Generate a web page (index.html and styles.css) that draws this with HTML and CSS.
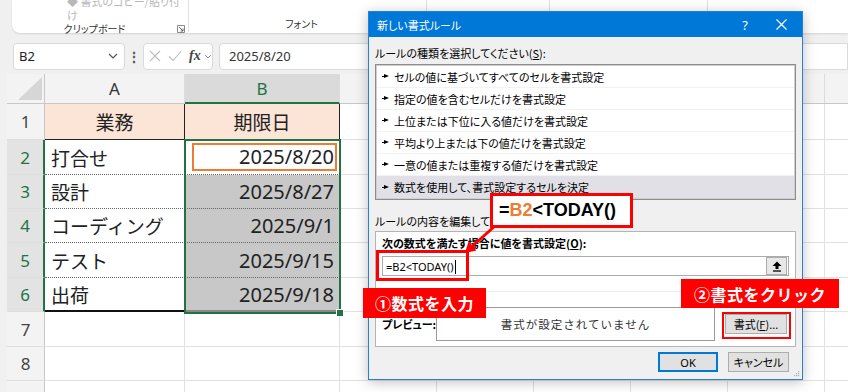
FILE: index.html
```html
<!DOCTYPE html>
<html lang="ja">
<head>
    <meta charset="UTF-8">
    <title>新しい書式ルール</title>
    <link rel="stylesheet" href="styles.css">
</head>
<body>
    <!-- ribbon -->
    <div class="ribbon">
        <div class="grp clip">
            <span class="ghost">&#9670; 書式のコピー/貼り付け</span>
            <div class="gfoot">
                <span class="glabel">クリップボード</span>
                <svg class="launch" width="8" height="8" viewBox="0 0 8 8"><path d="M0.5 0.5H7.5V7.5H0.5Z" fill="none" stroke="#888"/><path d="M2 2L6 6M6 3.5V6H3.5" fill="none" stroke="#666"/></svg>
            </div>
        </div>
        <div class="grp fnt">
            <div class="gfoot"><span class="glabel pad">フォント</span></div>
        </div>
        <div class="grp g3"></div>
        <div class="grp g4"></div>
        <div class="grp g5"></div>
    </div>

    <!-- formula bar -->
    <div class="fbar">
        <div class="namebox">
            <span>B2</span>
            <svg width="10" height="6" viewBox="0 0 10 6"><path d="M1 1L5 5L9 1" fill="none" stroke="#555" stroke-width="1.2"/></svg>
        </div>
        <div class="vdots">&#8942;</div>
        <div class="fxbox">
            <svg width="12" height="12" viewBox="0 0 12 12"><path d="M1 1L11 11M11 1L1 11" stroke="#bdbdbd" stroke-width="1.1"/></svg>
            <svg width="14" height="12" viewBox="0 0 14 12"><path d="M1 6.5L5 10.5L13 1.5" fill="none" stroke="#bdbdbd" stroke-width="1.1"/></svg>
            <span class="fx">fx</span>
            <svg width="8" height="5" viewBox="0 0 8 5"><path d="M1 1L4 4L7 1" fill="none" stroke="#999"/></svg>
        </div>
        <div class="formula">2025/8/20</div>
    </div>

    <!-- sheet -->
    <div class="sheet">
        <div class="row hdr">
            <div class="rh corner"><span class="tri"></span></div>
            <div class="ch">A</div>
            <div class="ch on">B</div>
            <div class="rest"></div>
        </div>
        <div class="row h36">
            <div class="rh">1</div>
            <div class="c a title">業務</div>
            <div class="c b title">期限日</div>
            <div class="rest"></div>
        </div>
        <div class="row h35">
            <div class="rh on">2</div>
            <div class="c a">打合せ</div>
            <div class="c b act"><span class="mark">2025/8/20</span></div>
            <div class="rest"></div>
        </div>
        <div class="row h34">
            <div class="rh on">3</div>
            <div class="c a">設計</div>
            <div class="c b gray">2025/8/27</div>
            <div class="rest"></div>
        </div>
        <div class="row h34">
            <div class="rh on">4</div>
            <div class="c a">コーディング</div>
            <div class="c b gray">2025/9/1</div>
            <div class="rest"></div>
        </div>
        <div class="row h35">
            <div class="rh on">5</div>
            <div class="c a">テスト</div>
            <div class="c b gray">2025/9/15</div>
            <div class="rest"></div>
        </div>
        <div class="row h34">
            <div class="rh on">6</div>
            <div class="c a last">出荷</div>
            <div class="c b gray last">2025/9/18</div>
            <div class="rest"></div>
        </div>
        <div class="row h35">
            <div class="rh">7</div>
            <div class="c a"></div>
            <div class="c b"></div>
            <div class="rest"></div>
        </div>
        <div class="row h34">
            <div class="rh">8</div>
            <div class="c a"></div>
            <div class="c b"></div>
            <div class="rest"></div>
        </div>
        <div class="row h34">
            <div class="rh"></div>
            <div class="c a"></div>
            <div class="c b"></div>
            <div class="rest"></div>
        </div>
        <div class="sel"><span class="handle"></span></div>
    </div>

    <!-- dialog -->
    <div class="dlg">
        <div class="dlg-title">
            <span class="dlg-name">新しい書式ルール</span>
            <span class="tb-btn">?</span>
            <span class="tb-btn">
                <svg width="11" height="11" viewBox="0 0 11 11"><path d="M0.5 0.5L10.5 10.5M10.5 0.5L0.5 10.5" stroke="#fff" stroke-width="1.2"/></svg>
            </span>
        </div>
        <div class="dlg-body">
            <div class="lbl">ルールの種類を選択してください(<u>S</u>):</div>
            <div class="listbox">
                <div class="item"><i class="ptr"></i>セルの値に基づいてすべてのセルを書式設定</div>
                <div class="item"><i class="ptr"></i>指定の値を含むセルだけを書式設定</div>
                <div class="item"><i class="ptr"></i>上位または下位に入る値だけを書式設定</div>
                <div class="item"><i class="ptr"></i>平均より上または下の値だけを書式設定</div>
                <div class="item"><i class="ptr"></i>一意の値または重複する値だけを書式設定</div>
                <div class="item chosen"><i class="ptr"></i>数式を使用して、書式設定するセルを決定</div>
            </div>
            <div class="lbl lbl2">ルールの内容を編集してください(<u>E</u>):</div>
            <div class="group">
                <div class="glbl">次の数式を満たす場合に値を書式設定(<u>O</u>):</div>
                <div class="input">
                    <span class="itext">=B2&lt;TODAY()<span class="caret"></span></span>
                    <span class="collapse">
                        <svg width="10" height="11" viewBox="0 0 10 11"><path d="M5 0.5L9.5 5H6.5V8H3.5V5H0.5Z" fill="#000"/><path d="M1 10H9" stroke="#000" stroke-width="1.3"/></svg>
                    </span>
                </div>
                <div class="sep"></div>
                <div class="preview-row">
                    <span class="plbl">プレビュー:</span>
                    <div class="preview">書式が設定されていません</div>
                    <span class="btn fmt">書式(<u>F</u>)...</span>
                </div>
            </div>
            <div class="actions">
                <span class="btn ok">OK</span>
                <span class="btn">キャンセル</span>
            </div>
        </div>
        <svg class="grip" width="7" height="7" viewBox="0 0 7 7"><g fill="#b0b0b0"><rect x="5" y="1" width="1.2" height="1.2"/><rect x="3" y="3" width="1.2" height="1.2"/><rect x="5" y="3" width="1.2" height="1.2"/><rect x="1" y="5" width="1.2" height="1.2"/><rect x="3" y="5" width="1.2" height="1.2"/><rect x="5" y="5" width="1.2" height="1.2"/></g></svg>
    </div>

    <!-- annotations -->
    <svg class="arrow" width="848" height="392" viewBox="0 0 848 392">
        <line x1="496" y1="225" x2="472" y2="246.5" stroke="#f00" stroke-width="3"/>
        <polygon points="465,253 468.5,241.5 476.5,250.5" fill="#f00"/>
    </svg>
    <div class="callout">=<span class="orange">B2</span>&lt;TODAY()</div>
    <div class="hl-input"></div>
    <div class="hl-btn"></div>
    <div class="tag tag1">①数式を入力</div>
    <div class="tag tag2">②書式をクリック</div>
</body>
</html>
```

FILE: styles.css
```css
body {
    margin: 0;
    width: 848px;
    height: 392px;
    overflow: hidden;
    position: relative;
    background-color: #f0f0f0;
    font-family: "Noto Sans CJK JP", sans-serif;
    color: #222;
}

/* ribbon */
.ribbon {
    display: flex;
    height: 33px;
    margin-left: 12px;
    background-color: #fff;
    border-radius: 0 0 0 8px;
    box-shadow: 0 1px 2px rgba(0, 0, 0, 0.12);
}

.grp {
    display: flex;
    flex-direction: column;
    height: 32px;
    border-right: 1px solid #e1e1e1;
    box-sizing: border-box;
}

.clip { width: 177px; }
.fnt { width: 238px; }
.g3 { width: 123px; }
.g4 { width: 158px; }
.g5 { flex: 1; border-right: none; }

.ghost {
    margin: -6px 0 0 55px;
    font-size: 11px;
    line-height: 14px;
    color: #b8b8b8;
    font-feature-settings: "palt";
}

.gfoot {
    display: flex;
    align-items: center;
    margin-top: auto;
    height: 14px;
    padding-bottom: 1px;
}

.glabel {
    flex: 1;
    text-align: center;
    font-size: 10px;
    line-height: 14px;
    color: #333;
    font-feature-settings: "palt";
}

.glabel.pad {
    padding-right: 12px;
}

.launch {
    margin-right: 3px;
}

/* formula bar */
.fbar {
    display: flex;
    align-items: center;
    height: 28px;
    margin-top: 9px;
    padding-left: 13px;
}

.namebox {
    display: flex;
    align-items: center;
    justify-content: space-between;
    width: 112px;
    height: 27px;
    box-sizing: border-box;
    padding: 0 6px 0 5px;
    background-color: #fff;
    border: 1px solid #dadada;
    border-radius: 4px;
    font-family: "Noto Sans", sans-serif;
    font-size: 13px;
}

.vdots {
    width: 18px;
    text-align: center;
    font-size: 14px;
    font-weight: bold;
    color: #555;
}

.fxbox {
    display: flex;
    align-items: center;
    gap: 7px;
    width: 70px;
    height: 27px;
    box-sizing: border-box;
    padding-left: 5px;
    background-color: #fff;
    border: 1px solid #dadada;
    border-radius: 4px;
}

.fx {
    font-family: "Liberation Serif", serif;
    font-style: italic;
    font-weight: bold;
    font-size: 14px;
    color: #444;
    margin-right: -4px;
}

.formula {
    flex: 1;
    height: 27px;
    margin-left: 6px;
    box-sizing: border-box;
    padding-left: 9px;
    line-height: 25px;
    background-color: #fff;
    border: 1px solid #dadada;
    border-radius: 4px 0 0 4px;
    font-family: "Noto Sans", sans-serif;
    font-size: 13px;
    color: #333;
}

/* sheet */
.sheet {
    position: relative;
    margin: 4px 0 0 7px;
    background-color: #fff;
}

.row {
    display: flex;
}

.hdr { height: 30px; }
.h34 { height: 34px; }
.h35 { height: 35px; }
.h36 { height: 36px; }

.rh {
    width: 38px;
    flex: none;
    box-sizing: border-box;
    background-color: #f3f3f3;
    border-right: 1px solid #c8c8c8;
    border-bottom: 1px solid #dedede;
    display: flex;
    align-items: center;
    justify-content: center;
    font-family: "Noto Sans", sans-serif;
    font-size: 17px;
    color: #444;
}

.rh.on {
    background-color: #e3e3e3;
    color: #217346;
    border-right: 2px solid #217346;
}

.corner {
    position: relative;
    border-bottom: 1px solid #c8c8c8;
}

.tri {
    position: absolute;
    right: 2px;
    bottom: 3px;
    width: 0;
    height: 0;
    border-left: 24px solid transparent;
    border-bottom: 23px solid #d6d6d6;
}

.ch {
    flex: none;
    box-sizing: border-box;
    background-color: #f3f3f3;
    border-right: 1px solid #dcdcdc;
    border-bottom: 1px solid #c8c8c8;
    display: flex;
    align-items: center;
    justify-content: center;
    font-family: "Noto Sans", sans-serif;
    font-size: 17px;
    color: #333;
}

.ch:nth-child(2) { width: 140px; }

.ch.on {
    width: 155px;
    background-color: #dadada;
    color: #217346;
    border-bottom: 2px solid #217346;
}

.rest {
    flex: 1;
    border-bottom: 1px solid #e1e1e1;
    background-image: repeating-linear-gradient(to right, transparent 0 96px, #e1e1e1 96px 97px);
}

.hdr .rest {
    background-color: #f3f3f3;
    border-bottom-color: #c8c8c8;
    background-image: repeating-linear-gradient(to right, transparent 0 96px, #dcdcdc 96px 97px);
}

.c {
    flex: none;
    box-sizing: border-box;
    border-right: 1px solid #e1e1e1;
    border-bottom: 1px solid #e1e1e1;
    display: flex;
    align-items: center;
    font-size: 19px;
}

.c.a {
    width: 140px;
    padding-left: 6px;
}

.c.b {
    width: 155px;
    justify-content: flex-end;
    padding-right: 5px;
    font-family: "Noto Sans", sans-serif;
    font-size: 20px;
}

.c.title {
    justify-content: center;
    padding: 0;
    background-color: #fce4d6;
    border-right: 1px solid #222;
    border-bottom: 1px solid #222;
    font-family: "Noto Sans CJK JP", sans-serif;
    font-size: 19px;
}

.row:nth-child(n+3):nth-child(-n+6) .c {
    border-bottom: 1px dotted #666;
}

.c.b.gray { background-color: #c8c8c8; }
.c.last { border-bottom: 2px solid #111; }
.c.b.last { border-bottom-color: #888; }

.c.act {
    padding: 0;
    justify-content: flex-start;
}

.mark {
    width: 145px;
    height: 28px;
    margin-left: 7px;
    box-sizing: border-box;
    border: 2px solid #ed7d31;
    padding-right: 1px;
    text-align: right;
    line-height: 23px;
}

.sel {
    position: absolute;
    left: 177px;
    top: 65px;
    width: 157px;
    height: 175px;
    box-sizing: border-box;
    border: 2px solid #217346;
}

.handle {
    position: absolute;
    right: -5px;
    bottom: -5px;
    width: 6px;
    height: 6px;
    background-color: #217346;
    border: 1px solid #fff;
}

/* dialog */
.dlg {
    position: absolute;
    left: 368px;
    top: 11px;
    width: 435px;
    height: 369px;
    box-sizing: border-box;
    border: 1px solid #2a7fd4;
    background-color: #f0f0f0;
    box-shadow: 0 2px 12px rgba(0, 0, 0, 0.25);
    font-size: 11px;
    font-feature-settings: "palt";
    color: #000;
}

.dlg-title {
    display: flex;
    align-items: center;
    height: 25px;
    padding: 0 3px 0 8px;
    background-color: #0078d7;
    color: #fff;
}

.dlg-name {
    flex: 1;
    font-size: 11px;
}

.tb-btn {
    width: 36px;
    text-align: center;
    font-family: "Noto Sans", sans-serif;
    font-size: 13px;
    display: flex;
    justify-content: center;
}

.dlg-body {
    padding: 0 6px;
}

.lbl {
    margin-top: 8px;
    height: 16px;
    line-height: 16px;
}

.lbl2 {
    margin-top: 13px;
}

.listbox {
    margin-top: 3px;
    height: 136px;
    box-sizing: border-box;
    padding: 1px;
    background-color: #fff;
    border: 1px solid #8c8c8c;
    box-shadow: inset 0 0 0 1px #cfcfcf;
}

.item {
    display: flex;
    align-items: center;
    height: 22px;
    box-sizing: border-box;
    padding-left: 5px;
    border-bottom: 1px solid #f2f2f2;
}

.item.chosen {
    background-color: #e0e0e6;
    border-bottom: none;
}

.ptr {
    width: 7px;
    height: 5px;
    margin-right: 5px;
    background: linear-gradient(#000, #000) left center / 3px 1px no-repeat;
    position: relative;
}

.ptr::after {
    content: "";
    position: absolute;
    right: 0;
    top: 0;
    border-left: 5px solid #000;
    border-top: 2.5px solid transparent;
    border-bottom: 2.5px solid transparent;
}

.group {
    margin-top: 2px;
    padding: 0 6px 5px;
    background-color: #fff;
    border: 1px solid #b4b4b4;
}

.glbl {
    margin-top: 4px;
    height: 14px;
    line-height: 14px;
    font-weight: bold;
}

.input {
    display: flex;
    align-items: center;
    justify-content: space-between;
    margin-top: 6px;
    height: 20px;
    box-sizing: border-box;
    padding: 0 1px 0 3px;
    border: 1px solid #ababab;
    font-family: "Noto Sans", sans-serif;
    font-feature-settings: normal;
    font-size: 11px;
}

.caret {
    display: inline-block;
    width: 1px;
    height: 14px;
    margin-left: 1px;
    background-color: #000;
    vertical-align: -3px;
}

.collapse {
    display: flex;
    align-items: center;
    justify-content: center;
    width: 19px;
    height: 16px;
    background-color: #e8e8e8;
    border: 1px solid #adadad;
}

.sep {
    margin-top: 15px;
    height: 1px;
    background-color: #ececec;
}

.preview-row {
    display: flex;
    align-items: center;
    margin-top: 15px;
}

.plbl {
    flex: none;
    width: 54px;
    white-space: nowrap;
    font-weight: bold;
}

.preview {
    flex: none;
    width: 279px;
    height: 34px;
    box-sizing: border-box;
    border: 1px solid #9a9a9a;
    text-align: center;
    line-height: 32px;
    font-size: 11.5px;
    letter-spacing: 1px;
    font-feature-settings: normal;
    color: #333;
}

.btn {
    display: inline-flex;
    align-items: center;
    justify-content: center;
    width: 61px;
    height: 20px;
    box-sizing: border-box;
    background-color: #e1e1e1;
    border: 1px solid #adadad;
    font-size: 11px;
    white-space: nowrap;
}

.fmt {
    flex: none;
    width: 62px;
    margin-left: 10px;
}

.actions {
    display: flex;
    justify-content: flex-end;
    gap: 10px;
    margin-top: 5px;
    padding-right: 7px;
}

.ok {
    width: 60px;
    border: 1px solid #0078d7;
    box-shadow: inset 0 0 0 1px #0078d7;
    font-family: "Noto Sans", sans-serif;
}

.grip {
    position: absolute;
    right: 2px;
    bottom: 2px;
}

/* annotations */
.arrow {
    position: absolute;
    left: 0;
    top: 0;
    pointer-events: none;
}

.callout {
    position: absolute;
    left: 490px;
    top: 193px;
    width: 143px;
    height: 35px;
    box-sizing: border-box;
    padding-left: 6px;
    background-color: #fff;
    border: 3px solid #f00;
    font-family: "Liberation Sans", Arial, sans-serif;
    font-weight: bold;
    font-size: 18px;
    line-height: 29px;
    color: #000;
}

.orange { color: #ed7d31; }

.hl-input {
    position: absolute;
    left: 376px;
    top: 250px;
    width: 93px;
    height: 31px;
    box-sizing: border-box;
    border: 3px solid #f00;
}

.hl-btn {
    position: absolute;
    left: 722px;
    top: 312px;
    width: 69px;
    height: 27px;
    box-sizing: border-box;
    border: 2px solid #f00;
}

.tag {
    position: absolute;
    display: flex;
    align-items: center;
    justify-content: center;
    background-color: #f00;
    color: #fff;
    font-weight: bold;
    font-size: 16px;
    letter-spacing: 0.5px;
}

.tag1 {
    left: 363px;
    top: 288px;
    width: 123px;
    height: 30px;
}

.tag2 {
    left: 681px;
    top: 279px;
    width: 158px;
    height: 29px;
}
```
